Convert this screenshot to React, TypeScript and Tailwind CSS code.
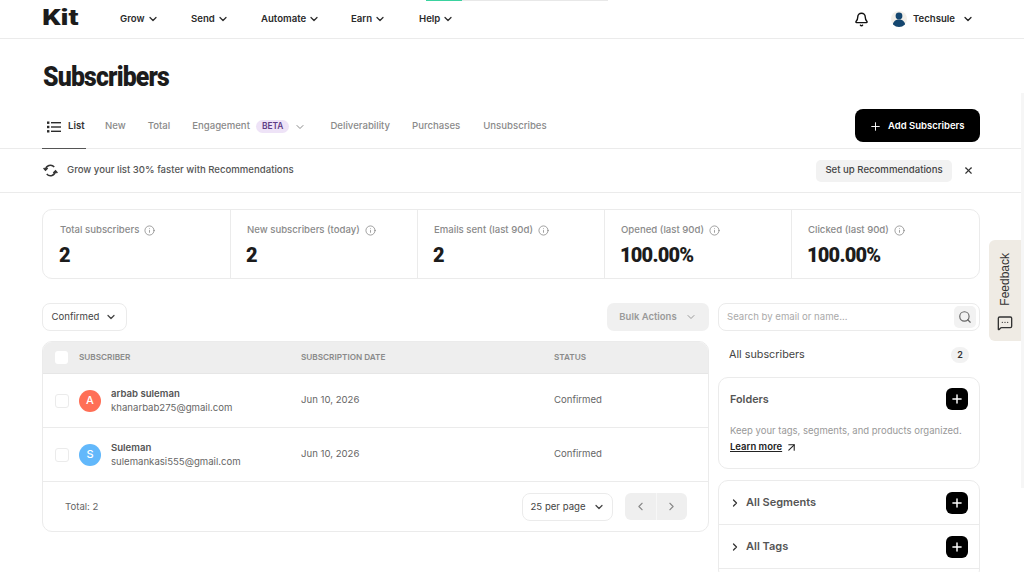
import {Bell, ChevronDown, ChevronLeft, ChevronRight, Info, MessageSquareMore, Plus, Search, X, ArrowUpRight} from 'lucide-react';

const navItems = [
  {label: 'Grow', width: 'w-[71px]'},
  {label: 'Send', width: 'w-[70px]'},
  {label: 'Automate', width: 'w-[90px]'},
  {label: 'Earn', width: 'w-[68px]'},
  {label: 'Help', width: ''},
];

const stats = [
  {label: 'Total subscribers', value: '2'},
  {label: 'New subscribers (today)', value: '2'},
  {label: 'Emails sent (last 90d)', value: '2'},
  {label: 'Opened (last 90d)', value: '100.00%'},
  {label: 'Clicked (last 90d)', value: '100.00%'},
];

const subscribers = [
  {name: 'arbab suleman', email: 'khanarbab275@gmail.com', initial: 'A', color: 'bg-[#ff6f56]'},
  {name: 'Suleman', email: 'sulemankasi555@gmail.com', initial: 'S', color: 'bg-[#62b8fb]'},
];

function PlusButton() {
  return (
    <button className="w-[22px] h-[22px] rounded-[6px] bg-black flex items-center justify-center">
      <Plus className="w-[14px] h-[14px] text-white" strokeWidth={2.5} />
    </button>
  );
}

export default function App() {
  return (
    <div className="relative w-[1024px] h-[572px] overflow-hidden bg-white font-['Inter',sans-serif] text-[#1f1f1f]">
      {/* Loading bar */}
      <div className="absolute top-0 left-[426px] w-[182px] h-px bg-[#e8e8e8]">
        <div className="w-[36px] h-px bg-[#3ad29f]" />
      </div>

      {/* Header */}
      <header className="h-[39px] border-b border-[#ebebeb] pl-[42px] pr-[50px] flex items-center">
        <div className="w-[78px]">
          <span className="inline-block origin-left scale-x-[1.32] font-['Roboto',sans-serif] font-black text-[22px] leading-none text-[#1c1c1c]">Kit</span>
        </div>
        <nav className="flex items-center">
          {navItems.map((item) => (
            <div key={item.label} className={`flex items-center gap-[2px] text-[9.6px] font-semibold text-[#2b2b2b] ${item.width}`}>
              {item.label}
              <ChevronDown className="w-[12px] h-[12px]" strokeWidth={2.5} />
            </div>
          ))}
        </nav>
        <div className="ml-auto flex items-center">
          <Bell className="w-[15px] h-[15px] text-[#111] mr-[22px]" strokeWidth={2.25} />
          <div className="w-[16px] h-[16px] rounded-full bg-[#f2efe9] mr-[6px] overflow-hidden">
            <svg viewBox="0 0 16 16" className="w-full h-full">
              <circle cx="8" cy="5" r="3.4" fill="#14466f" />
              <path d="M1.500 16c0-5 2.500-7.500 6.500-7.500s6.500 2.500 6.500 7.500z" fill="#14466f" />
            </svg>
          </div>
          <span className="text-[9.6px] font-semibold text-[#2b2b2b] mr-[7px]">Techsule</span>
          <ChevronDown className="w-[12px] h-[12px]" strokeWidth={2.5} />
        </div>
      </header>

      {/* Title */}
      <div className="h-[64px] pl-[43px] flex items-end">
        <h1 className="inline-block origin-left scale-x-[0.92] font-['Roboto',sans-serif] font-black text-[27px] leading-[32px] mb-[10px] tracking-[-0.9px] text-[#1c1c1c]">Subscribers</h1>
      </div>

      {/* Tabs */}
      <div className="h-[46px] border-b border-[#ebebeb] pl-[42px] pr-[44px] pt-[2px] flex items-center text-[9.6px] font-medium text-[#8a8a8a] relative">
        <div className="flex items-center gap-[7px] h-full w-[44px] pl-[5px] border-b border-[#555] mb-[-1px] text-[#333] font-semibold">
          <svg viewBox="0 0 14 12" className="w-[14px] h-[12px] shrink-0" fill="#2b2b2b">
            <rect x="0" y="0.500" width="2.400" height="2.400" />
            <rect x="0" y="4.800" width="2.400" height="2.400" />
            <rect x="0" y="9.100" width="2.400" height="2.400" />
            <rect x="4" y="1" width="10" height="1.400" />
            <rect x="4" y="5.300" width="10" height="1.400" />
            <rect x="4" y="9.600" width="10" height="1.400" />
          </svg>
          List
        </div>
        <span className="ml-[19px]">New</span>
        <span className="ml-[22px]">Total</span>
        <span className="ml-[22px]">Engagement</span>
        <span className="ml-[6px] px-[6px] h-[13px] leading-[13px] rounded-full bg-[#eee3f7] text-[#5e3c86] text-[8.4px] font-semibold">BETA</span>
        <ChevronDown className="ml-[5px] w-[12px] h-[12px]" strokeWidth={2} />
        <span className="ml-[24px]">Deliverability</span>
        <span className="ml-[22px]">Purchases</span>
        <span className="ml-[23px]">Unsubscribes</span>
        <button className="ml-auto -mt-[2px] w-[125px] h-[33px] pl-[14px] pt-[2px] rounded-[8px] bg-black text-white text-[9.5px] font-semibold flex items-center gap-[6px]">
          <Plus className="w-[13px] h-[13px]" strokeWidth={1.75} />
          Add Subscribers
        </button>
      </div>

      {/* Banner */}
      <div className="h-[44px] border-b border-[#ebebeb] pl-[43px] pr-[50px] flex items-center text-[#555]">
        <svg viewBox="0 0 24 24" className="w-[15px] h-[15px] mr-[9px]" fill="none" stroke="#333" strokeWidth={2.4}>
          <path d="M4 11a8 8 0 0 1 14-4.500" />
          <path d="M1 8l3 3.500L7.500 8" />
          <path d="M20 13a8 8 0 0 1-14 4.500" />
          <path d="M16.500 16l3.500-3.500 3 3.500" />
        </svg>
        <span className="text-[9.6px] font-medium">Grow your list 30% faster with Recommendations</span>
        <button className="ml-auto h-[22px] w-[136px] rounded-[5px] bg-[#f2f2f2] text-[9.6px] font-medium text-[#444]">Set up Recommendations</button>
        <X className="ml-[11px] w-[11px] h-[11px] text-[#333]" strokeWidth={2.5} />
      </div>

      <main className="pl-[42px] pr-[44px] pt-[16px]">
        {/* Stats */}
        <div className="grid grid-cols-[187px_187px_187px_187px_1fr] h-[70px] rounded-[10px] border border-[#ebebeb]">
          {stats.map((stat, i) => (
            <div key={stat.label} className={`pt-[14px] ${i > 0 ? 'pl-[16px] border-l border-[#ebebeb]' : 'pl-[17px]'}`}>
              <div className="flex items-center gap-[5px] text-[9.6px] font-medium text-[#8a8a8a] h-[13px]">
                {stat.label}
                <Info className="w-[11px] h-[11px] text-[#777]" strokeWidth={1.5} />
              </div>
              <div className="font-['Roboto',sans-serif] font-black text-[20px] leading-[24px] mt-[6px] -ml-[1px] tracking-[-0.8px] text-[#1c1c1c]">{stat.value}</div>
            </div>
          ))}
        </div>

        <div className="flex gap-[9px] mt-[24px]">
          {/* Left column */}
          <div className="w-[667px] shrink-0">
            <div className="flex items-center justify-between h-[28px]">
              <button className="h-[28px] w-[85px] rounded-[8px] border border-[#ebebeb] flex items-center justify-center gap-[6px] text-[9.6px] text-[#444]">
                Confirmed
                <ChevronDown className="w-[12px] h-[12px]" strokeWidth={2.5} />
              </button>
              <button className="h-[28px] w-[102px] rounded-[7px] bg-[#f0f0f0] flex items-center justify-center gap-[8px] text-[9.5px] font-semibold text-[#9a9a9a]">
                Bulk Actions
                <ChevronDown className="w-[12px] h-[12px]" strokeWidth={2} />
              </button>
            </div>

            <div className="mt-[10px] h-[191px] rounded-[10px] border border-[#ebebeb] overflow-hidden">
              <div className="h-[32px] bg-[#eeeeee] border-b border-[#e6e6e6] flex items-center text-[8.2px] font-semibold text-[#8a8a8a] uppercase">
                <span className="ml-[12px] w-[13px] h-[13px] rounded-[3px] bg-white shrink-0" />
                <span className="ml-[11px] w-[222px]">Subscriber</span>
                <span className="w-[253px]">Subscription date</span>
                <span>Status</span>
              </div>
              {subscribers.map((s) => (
                <div key={s.email} className="h-[54px] border-b border-[#ebebeb] flex items-center text-[9.6px] text-[#666]">
                  <span className="ml-[12px] w-[14px] h-[14px] rounded-[3px] border border-[#ebebeb] shrink-0" />
                  <span className={`ml-[10px] w-[22px] h-[22px] rounded-full ${s.color} text-white text-[11px] font-medium flex items-center justify-center shrink-0`}>{s.initial}</span>
                  <div className="ml-[10px] w-[190px]">
                    <div className="font-semibold text-[#555] leading-[14px]">{s.name}</div>
                    <div className="leading-[14px]">{s.email}</div>
                  </div>
                  <span className="w-[253px]">Jun 10, 2026</span>
                  <span>Confirmed</span>
                </div>
              ))}
              <div className="h-[49px] pl-[22px] pr-[21px] flex items-center text-[9.6px] text-[#666]">
                <span className="pt-[2px]">Total: 2</span>
                <button className="ml-auto h-[28px] w-[91px] pt-[1px] rounded-[8px] border border-[#ebebeb] flex items-center justify-center gap-[7px] text-[#444]">
                  25 per page
                  <ChevronDown className="w-[12px] h-[12px]" strokeWidth={2.5} />
                </button>
                <div className="ml-[12px] flex h-[27px] w-[62px] rounded-[6px] bg-[#efefef] text-[#888]">
                  <span className="flex-1 flex items-center justify-center border-r border-[#f7f7f7]"><ChevronLeft className="w-[13px] h-[13px]" strokeWidth={2} /></span>
                  <span className="flex-1 flex items-center justify-center"><ChevronRight className="w-[13px] h-[13px]" strokeWidth={2} /></span>
                </div>
              </div>
            </div>
          </div>

          {/* Right column */}
          <div className="w-[262px] shrink-0">
            <div className="h-[28px] rounded-[8px] border border-[#ebebeb] flex items-center pl-[8px] pr-[3px] text-[9.6px] text-[#aaa]">
              Search by email or name...
              <span className="ml-auto w-[22px] h-[22px] rounded-[5px] bg-[#f2f2f2] flex items-center justify-center">
                <Search className="w-[14px] h-[14px] text-[#666]" strokeWidth={2} />
              </span>
            </div>
            <div className="h-[46px] pl-[11px] pr-[11px] pt-[2px] flex items-center text-[10.8px] text-[#444]">
              All subscribers
              <span className="ml-auto w-[18px] h-[16px] rounded-full bg-[#f2f2f2] text-[9px] font-semibold text-[#333] flex items-center justify-center">2</span>
            </div>
            <div className="h-[92px] rounded-[10px] border border-[#ebebeb] px-[11px] pt-[10px]">
              <div className="flex items-center justify-between">
                <span className="pt-[2px] text-[10.8px] font-semibold text-[#555]">Folders</span>
                <PlusButton />
              </div>
              <p className="mt-[13px] text-[9.5px] leading-[16px] text-[#999] whitespace-nowrap">Keep your tags, segments, and products organized.</p>
              <div className="flex items-center gap-[3px] text-[9.5px] leading-[16px] font-semibold text-[#222]">
                <span className="underline">Learn more</span>
                <ArrowUpRight className="w-[13px] h-[13px]" strokeWidth={2} />
              </div>
            </div>
            <div className="mt-[11px] h-[100px] rounded-[10px] border border-[#ebebeb]">
              {['All Segments', 'All Tags'].map((label) => (
                <div key={label} className="h-[44px] border-b border-[#ebebeb] pl-[10px] pr-[11px] flex items-center text-[11px] font-semibold text-[#555]">
                  <ChevronRight className="w-[12px] h-[12px] text-[#333] mr-[5px]" strokeWidth={2.5} />
                  {label}
                  <span className="ml-auto"><PlusButton /></span>
                </div>
              ))}
            </div>
          </div>
        </div>
      </main>

      {/* Scrollbar thumb */}
      <div className="absolute left-[1021px] top-[93px] w-[3px] h-[395px] bg-[#f6f6f6]" />

      {/* Feedback tab */}
      <div className="absolute left-[989px] top-[240px] w-[32px] h-[101px] rounded-l-[6px] bg-[#efebe4] flex flex-col items-center justify-end pb-[10px] text-[#333]">
        <span className="[writing-mode:vertical-rl] rotate-180 text-[12px] font-['Liberation_Sans',sans-serif] mb-[9px]">Feedback</span>
        <MessageSquareMore className="w-[16px] h-[16px]" strokeWidth={2} />
      </div>
    </div>
  );
}
